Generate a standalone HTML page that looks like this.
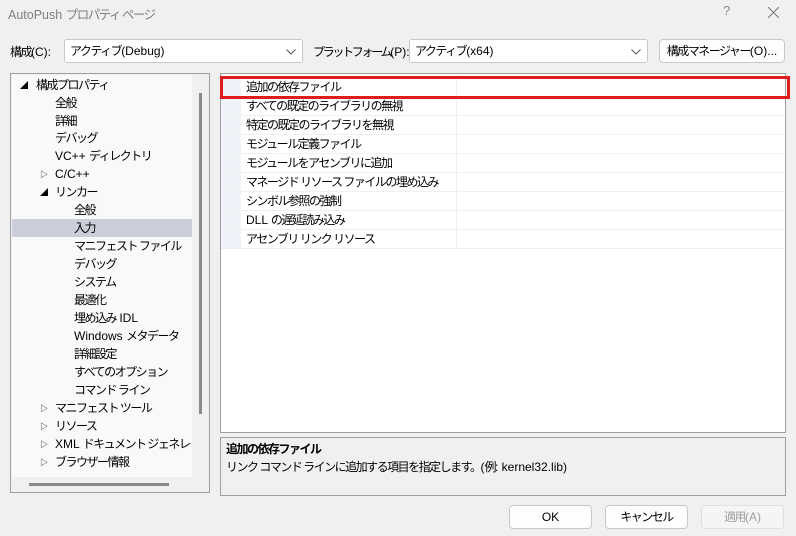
<!DOCTYPE html>
<html><head><meta charset="utf-8"><style>
*{margin:0;padding:0;box-sizing:border-box}
body{width:796px;height:536px;background:#f0f0f0;font-family:"Liberation Sans","Noto Sans CJK JP",sans-serif;font-size:12px;color:#000;position:relative;overflow:hidden;letter-spacing:-1.5px}
i{font-style:normal;letter-spacing:0}
.a{position:absolute;white-space:nowrap}
.combo{position:absolute;background:#fff;border:1px solid #c8c8c8;border-radius:3px;height:24px;line-height:22px;padding-left:5px}
.btn{position:absolute;background:#fdfdfd;border:1px solid #c8c8c8;border-radius:4px;height:24px;line-height:22px;text-align:center}
.ti{position:absolute;height:18px;line-height:18px;white-space:nowrap}
.row{position:absolute;left:221px;width:563px;height:19px;border-bottom:1px solid #eef0f4}
.row span{position:absolute;left:25px;line-height:18px;white-space:nowrap}
.tri{position:absolute;font-size:8px;letter-spacing:0}
</style></head><body>
<div class="a" style="left:8px;top:4px;color:#808080;font-size:12.5px"><i>AutoPush </i>プロパティ ページ</div>
<div class="a" style="left:723px;top:3px;color:#888;font-size:13px">?</div>
<svg class="a" style="left:768px;top:7px" width="11" height="11"><path d="M0 0L11 11M11 0L0 11" stroke="#777" stroke-width="1"/></svg>

<div class="a" style="left:10px;top:43px">構成<i>(C):</i></div>
<div class="combo" style="left:64px;top:39px;width:239px">アクティブ<i>(Debug)</i><svg style="position:absolute;right:6px;top:9px" width="10" height="6"><path d="M0.5 0.5L5 5L9.5 0.5" stroke="#555" fill="none"/></svg></div>
<div class="a" style="left:313px;top:43px;letter-spacing:-2.3px">プラットフォーム<i>(P):</i></div>
<div class="combo" style="left:409px;top:39px;width:239px">アクティブ<i>(x64)</i><svg style="position:absolute;right:6px;top:9px" width="10" height="6"><path d="M0.5 0.5L5 5L9.5 0.5" stroke="#555" fill="none"/></svg></div>
<div class="btn" style="left:659px;top:39px;width:126px">構成マネージャー<i>(O)...</i></div>

<div class="a" style="left:10px;top:73px;width:200px;height:420px;border:1px solid #a0a0a0;background:#f0f0f0">
 <div style="position:absolute;left:1px;top:1px;width:180px;height:402px;background:#f9f9f9"></div>
 <div style="position:absolute;left:1px;top:145px;width:180px;height:18px;background:#cbcdd9"></div>
 <div style="position:absolute;left:188px;top:19px;width:3px;height:321px;background:#8a8a8a"></div>
 <div style="position:absolute;left:18px;top:409px;width:140px;height:3px;background:#8a8a8a"></div>
</div>
<div class="tri a" style="left:20px;top:80px">◢</div><div class="ti" style="left:36px;top:76px">構成プロパティ</div>
<div class="ti" style="left:55px;top:94px">全般</div>
<div class="ti" style="left:55px;top:112px">詳細</div>
<div class="ti" style="left:55px;top:129px">デバッグ</div>
<div class="ti" style="left:55px;top:147px"><i>VC++ </i>ディレクトリ</div>
<div class="tri a" style="left:40px;top:169px">▷</div><div class="ti" style="left:55px;top:165px"><i>C/C++</i></div>
<div class="tri a" style="left:40px;top:187px">◢</div><div class="ti" style="left:55px;top:183px">リンカー</div>
<div class="ti" style="left:74px;top:201px">全般</div>
<div class="ti" style="left:74px;top:219px">入力</div>
<div class="ti" style="left:74px;top:237px">マニフェスト ファイル</div>
<div class="ti" style="left:74px;top:255px">デバッグ</div>
<div class="ti" style="left:74px;top:273px">システム</div>
<div class="ti" style="left:74px;top:291px">最適化</div>
<div class="ti" style="left:74px;top:309px">埋め込み<i> IDL</i></div>
<div class="ti" style="left:74px;top:327px"><i>Windows </i>メタデータ</div>
<div class="ti" style="left:74px;top:345px">詳細設定</div>
<div class="ti" style="left:74px;top:363px">すべてのオプション</div>
<div class="ti" style="left:74px;top:381px">コマンド ライン</div>
<div class="tri a" style="left:40px;top:403px">▷</div><div class="ti" style="left:55px;top:399px">マニフェスト ツール</div>
<div class="tri a" style="left:40px;top:421px">▷</div><div class="ti" style="left:55px;top:417px">リソース</div>
<div class="tri a" style="left:40px;top:439px">▷</div><div class="ti" style="left:55px;top:435px;width:136px;overflow:hidden"><i>XML </i>ドキュメント ジェネレーター</div>
<div class="tri a" style="left:40px;top:457px">▷</div><div class="ti" style="left:55px;top:453px">ブラウザー情報</div>

<div class="a" style="left:220px;top:73px;width:566px;height:360px;border:1px solid #a0a0a0;background:#fff"></div>
<div class="a" style="left:221px;top:78px;width:20px;height:171px;background:#f0f4f9"></div>
<div class="a" style="left:456px;top:78px;width:1px;height:171px;background:#eef0f4"></div>
<div class="row" style="top:78px"><span>追加の依存ファイル</span></div>
<div class="row" style="top:97px"><span>すべての既定のライブラリの無視</span></div>
<div class="row" style="top:116px"><span>特定の既定のライブラリを無視</span></div>
<div class="row" style="top:135px"><span>モジュール定義ファイル</span></div>
<div class="row" style="top:154px"><span>モジュールをアセンブリに追加</span></div>
<div class="row" style="top:173px"><span>マネージド リソース ファイルの埋め込み</span></div>
<div class="row" style="top:192px"><span>シンボル参照の強制</span></div>
<div class="row" style="top:211px"><span><i>DLL </i>の遅延読み込み</span></div>
<div class="row" style="top:230px"><span>アセンブリ リンク リソース</span></div>
<div class="a" style="left:220px;top:76px;width:570px;height:23px;border:3px solid #e01c1c"></div>

<div class="a" style="left:220px;top:437px;width:566px;height:59px;border:1px solid #a0a0a0;background:#f0f0f0"></div>
<div class="a" style="left:226px;top:440px;font-weight:bold">追加の依存ファイル</div>
<div class="a" style="left:226px;top:458px">リンク コマンド ラインに追加する項目を指定します。<i>(</i>例<i>: kernel32.lib)</i></div>

<div class="btn" style="left:509px;top:505px;width:83px"><i>OK</i></div>
<div class="btn" style="left:605px;top:505px;width:83px">キャンセル</div>
<div class="btn" style="left:701px;top:505px;width:83px;background:#f5f5f5;border-color:#e0e0e0;color:#a0a0a0">適用<i>(A)</i></div>
</body></html>
